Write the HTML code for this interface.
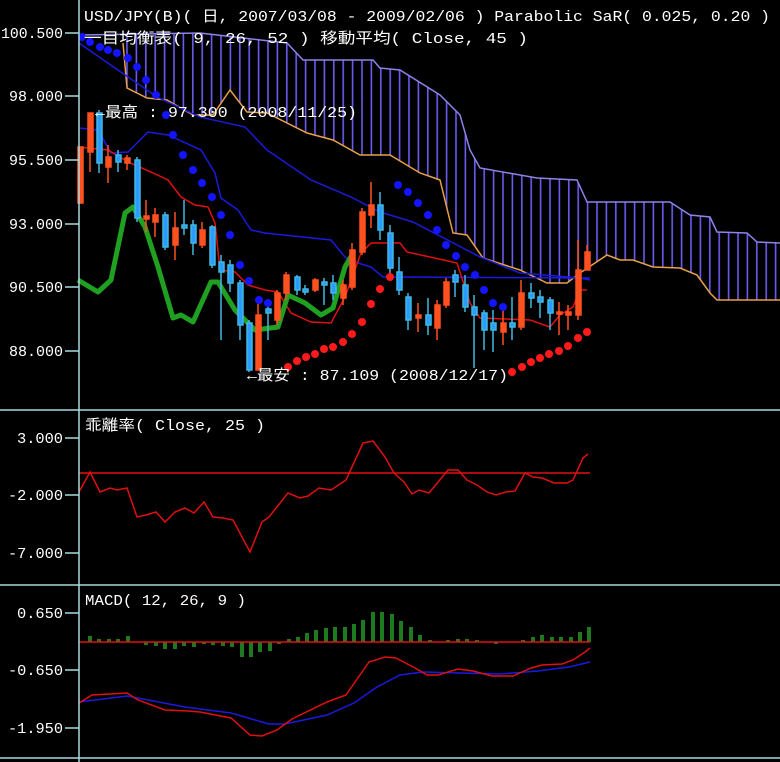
<!DOCTYPE html>
<html><head><meta charset="utf-8"><style>
html,body{margin:0;padding:0;background:#000;width:780px;height:762px;overflow:hidden}
svg{display:block}
text{font-family:"Liberation Mono","Noto Sans CJK JP",monospace;fill:#fff;font-size:15px}
</style></head><body>
<svg width="780" height="762" viewBox="0 0 780 762" xmlns="http://www.w3.org/2000/svg">
<defs>
<clipPath id="cl"><polygon points="123,34 200,33 287,43 303,60 373,60 380,68 400,70 440,95 460,115 470,150 480,168 537,178 577,180 587,202 670,202 690,215 710,217 717,232 747,233 757,242 780,243 780,300 717,300 710,293 697,275 680,268 653,267 633,260 620,260 607,255 580,273 567,283 547,283 520,270 483,258 467,235 453,233 440,180 420,173 390,155 360,155 333,140 307,133 267,113 247,112 230,90 213,115 193,115 167,100 147,98 127,88 123,43"/></clipPath>
<pattern id="hp" x="0" y="0" width="9.4" height="10" patternUnits="userSpaceOnUse"><rect x="4" y="0" width="1.6" height="10" fill="#6a5cf0"/></pattern>
</defs>
<rect width="780" height="762" fill="#000"/>
<rect x="80" y="0" width="700" height="410" fill="url(#hp)" clip-path="url(#cl)"/>
<polyline fill="none" stroke="#8c84e8" stroke-width="1.5" points="79,35 200,33 287,43 303,60 373,60 380,68 400,70 440,95 460,115 470,150 480,168 537,178 577,180 587,202 670,202 690,215 710,217 717,232 747,233 757,242 780,243"/>
<polyline fill="none" stroke="#e8a048" stroke-width="1.5" points="123,43 127,88 147,98 167,100 193,115 213,115 230,90 247,112 267,113 307,133 333,140 360,155 390,155 420,173 440,180 453,233 467,235 483,258 520,270 547,283 567,283 580,273 607,255 620,260 633,260 653,267 680,268 697,275 710,293 717,300 780,300"/>
<!-- MA45 -->
<polyline fill="none" stroke="#1a1ad8" stroke-width="1.5" points="79,43 157,97 200,117 245,127 267,150 311,180 351,197 380,212 413,222 480,257 520,273 580,278 590,280"/>
<!-- kijun -->
<polyline fill="none" stroke="#1a1ae0" stroke-width="1.5" points="79,128 98,130 111,153 128,152 148,132 168,135 201,150 215,173 221,198 238,210 251,230 265,233 331,240 345,257 358,263 371,267 383,277 398,277 590,278"/>
<!-- tenkan -->
<polyline fill="none" stroke="#e01010" stroke-width="1.5" points="78,147 108,150 128,162 151,172 168,180 181,197 195,205 208,207 215,223 220,270 235,272 248,285 265,290 278,292 291,313 311,322 331,323 345,297 361,253 371,243 400,243 407,252 430,257 457,263 470,303 480,318 530,320 550,327 560,315 573,307 580,290 587,290"/>
<!-- chikou -->
<polyline fill="none" stroke="#20a020" stroke-width="5" stroke-linejoin="round" points="78,280 98,292 111,280 125,213 133,207 145,227 158,267 173,318 181,315 193,322 211,282 218,282 235,310 255,330 278,327 288,295 305,303 321,315 333,308 345,267 353,253"/>
<!-- candles -->
<g stroke-width="1.5">
<g stroke="#ff5020" fill="#ff5020">
<line x1="80" y1="147" x2="80" y2="203"/><rect x="78" y="147" width="5" height="56"/>
<line x1="90" y1="113" x2="90" y2="172"/><rect x="88" y="113" width="5" height="39"/>
<line x1="108" y1="145" x2="108" y2="183"/><rect x="106" y="157" width="5" height="10"/>
<line x1="127" y1="155" x2="127" y2="170"/><rect x="125" y="158" width="5" height="5"/>
<line x1="146" y1="200" x2="146" y2="232"/><rect x="144" y="216" width="5" height="3"/>
<line x1="155" y1="208" x2="155" y2="237"/><rect x="153" y="215" width="5" height="7"/>
<line x1="175" y1="212" x2="175" y2="260"/><rect x="173" y="228" width="5" height="17"/>
<line x1="202" y1="222" x2="202" y2="248"/><rect x="200" y="230" width="5" height="15"/>
<line x1="258" y1="300" x2="258" y2="370"/><rect x="256" y="315" width="5" height="55"/>
<line x1="277" y1="290" x2="277" y2="325"/><rect x="275" y="293" width="5" height="27"/>
<line x1="286" y1="272" x2="286" y2="300"/><rect x="284" y="275" width="5" height="18"/>
<line x1="315" y1="278" x2="315" y2="292"/><rect x="313" y="280" width="5" height="10"/>
<line x1="343" y1="280" x2="343" y2="305"/><rect x="341" y="285" width="5" height="13"/>
<line x1="352" y1="243" x2="352" y2="290"/><rect x="350" y="250" width="5" height="37"/>
<line x1="362" y1="208" x2="362" y2="255"/><rect x="360" y="212" width="5" height="40"/>
<line x1="371" y1="182" x2="371" y2="228"/><rect x="369" y="205" width="5" height="10"/>
<line x1="418" y1="303" x2="418" y2="332"/><rect x="416" y="315" width="5" height="3"/>
<line x1="437" y1="300" x2="437" y2="340"/><rect x="435" y="305" width="5" height="23"/>
<line x1="446" y1="278" x2="446" y2="308"/><rect x="444" y="282" width="5" height="23"/>
<line x1="503" y1="308" x2="503" y2="345"/><rect x="501" y="323" width="5" height="9"/>
<line x1="521" y1="280" x2="521" y2="330"/><rect x="519" y="293" width="5" height="34"/>
<line x1="559" y1="302" x2="559" y2="335"/><rect x="557" y="312" width="5" height="2"/>
<line x1="568" y1="305" x2="568" y2="330"/><rect x="566" y="312" width="5" height="3"/>
<line x1="578" y1="240" x2="578" y2="320"/><rect x="576" y="270" width="5" height="45"/>
<line x1="587" y1="245" x2="587" y2="270"/><rect x="585" y="252" width="5" height="18"/>
</g>
<g stroke="#40b8e0" fill="#2a9cff">
<line x1="99" y1="110" x2="99" y2="173"/><rect x="97" y="113" width="5" height="50"/>
<line x1="118" y1="150" x2="118" y2="172"/><rect x="116" y="155" width="5" height="7"/>
<line x1="137" y1="157" x2="137" y2="222"/><rect x="135" y="160" width="5" height="58"/>
<line x1="165" y1="212" x2="165" y2="250"/><rect x="163" y="215" width="5" height="32"/>
<line x1="184" y1="200" x2="184" y2="235"/><rect x="182" y="225" width="5" height="3"/>
<line x1="193" y1="220" x2="193" y2="255"/><rect x="191" y="225" width="5" height="18"/>
<line x1="212" y1="225" x2="212" y2="268"/><rect x="210" y="227" width="5" height="38"/>
<line x1="221" y1="255" x2="221" y2="340"/><rect x="219" y="262" width="5" height="10"/>
<line x1="230" y1="260" x2="230" y2="292"/><rect x="228" y="265" width="5" height="18"/>
<line x1="240" y1="280" x2="240" y2="340"/><rect x="238" y="283" width="5" height="42"/>
<line x1="249" y1="320" x2="249" y2="372"/><rect x="247" y="323" width="5" height="47"/>
<line x1="268" y1="302" x2="268" y2="340"/><rect x="266" y="309" width="5" height="4"/>
<line x1="297" y1="275" x2="297" y2="295"/><rect x="295" y="277" width="5" height="13"/>
<line x1="305" y1="285" x2="305" y2="295"/><rect x="303" y="289" width="5" height="3"/>
<line x1="324" y1="278" x2="324" y2="305"/><rect x="322" y="282" width="5" height="3"/>
<line x1="333" y1="275" x2="333" y2="300"/><rect x="331" y="283" width="5" height="10"/>
<line x1="380" y1="192" x2="380" y2="240"/><rect x="378" y="205" width="5" height="25"/>
<line x1="390" y1="225" x2="390" y2="275"/><rect x="388" y="233" width="5" height="35"/>
<line x1="399" y1="257" x2="399" y2="295"/><rect x="397" y="272" width="5" height="18"/>
<line x1="408" y1="293" x2="408" y2="330"/><rect x="406" y="297" width="5" height="23"/>
<line x1="428" y1="298" x2="428" y2="335"/><rect x="426" y="315" width="5" height="10"/>
<line x1="455" y1="270" x2="455" y2="297"/><rect x="453" y="275" width="5" height="7"/>
<line x1="465" y1="275" x2="465" y2="312"/><rect x="463" y="285" width="5" height="22"/>
<line x1="474" y1="295" x2="474" y2="368"/><rect x="472" y="307" width="5" height="8"/>
<line x1="484" y1="310" x2="484" y2="350"/><rect x="482" y="313" width="5" height="17"/>
<line x1="493" y1="310" x2="493" y2="352"/><rect x="491" y="323" width="5" height="7"/>
<line x1="512" y1="297" x2="512" y2="340"/><rect x="510" y="323" width="5" height="4"/>
<line x1="531" y1="283" x2="531" y2="308"/><rect x="529" y="293" width="5" height="5"/>
<line x1="540" y1="290" x2="540" y2="318"/><rect x="538" y="297" width="5" height="5"/>
<line x1="550" y1="297" x2="550" y2="330"/><rect x="548" y="300" width="5" height="13"/>
</g>
</g>
<!-- SAR dots -->
<g fill="#1414ff">
<circle cx="82" cy="37" r="4"/><circle cx="90" cy="42" r="4"/><circle cx="100" cy="47" r="4"/><circle cx="108" cy="50" r="4"/><circle cx="117" cy="53" r="4"/><circle cx="128" cy="58" r="4"/><circle cx="137" cy="67" r="4"/><circle cx="146" cy="80" r="4"/><circle cx="156" cy="95" r="4"/><circle cx="166" cy="115" r="4"/><circle cx="173" cy="135" r="4"/><circle cx="183" cy="155" r="4"/><circle cx="193" cy="170" r="4"/><circle cx="202" cy="183" r="4"/><circle cx="212" cy="197" r="4"/><circle cx="221" cy="215" r="4"/><circle cx="230" cy="235" r="4"/><circle cx="240" cy="265" r="4"/><circle cx="249" cy="281" r="4"/><circle cx="259" cy="300" r="4"/><circle cx="268" cy="303" r="4"/>
<circle cx="398" cy="185" r="4"/><circle cx="408" cy="192" r="4"/><circle cx="418" cy="203" r="4"/><circle cx="428" cy="215" r="4"/><circle cx="437" cy="230" r="4"/><circle cx="446" cy="245" r="4"/><circle cx="456" cy="256" r="4"/><circle cx="465" cy="267" r="4"/><circle cx="475" cy="275" r="4"/><circle cx="484" cy="290" r="4"/><circle cx="493" cy="303" r="4"/><circle cx="503" cy="307" r="4"/>
</g>
<g fill="#ff1a1a">
<circle cx="288" cy="367" r="4"/><circle cx="297" cy="361" r="4"/><circle cx="306" cy="357" r="4"/><circle cx="315" cy="354" r="4"/><circle cx="324" cy="349" r="4"/><circle cx="333" cy="347" r="4"/><circle cx="343" cy="342" r="4"/><circle cx="352" cy="334" r="4"/><circle cx="362" cy="322" r="4"/><circle cx="371" cy="304" r="4"/><circle cx="380" cy="289" r="4"/><circle cx="390" cy="277" r="4"/>
<circle cx="512" cy="372" r="4"/><circle cx="522" cy="367" r="4"/><circle cx="531" cy="362" r="4"/><circle cx="540" cy="358" r="4"/><circle cx="549" cy="354" r="4"/><circle cx="559" cy="351" r="4"/><circle cx="568" cy="346" r="4"/><circle cx="578" cy="338" r="4"/><circle cx="587" cy="332" r="4"/>
</g>
<!-- texts main -->
<text x="84" y="21" textLength="686" lengthAdjust="spacingAndGlyphs">USD/JPY(B)( 日, 2007/03/08 - 2009/02/06 )   Parabolic SaR( 0.025, 0.20 )</text>
<text x="84" y="43" textLength="444" lengthAdjust="spacingAndGlyphs">一目均衡表( 9, 26, 52 )   移動平均( Close, 45 )</text>
<text x="95" y="117" textLength="262" lengthAdjust="spacingAndGlyphs">←最高 : 97.300 (2008/11/25)</text>
<text x="247" y="380" textLength="261" lengthAdjust="spacingAndGlyphs">←最安 : 87.109 (2008/12/17)</text>
<!-- panel 2 -->
<line x1="79" y1="473" x2="590" y2="473" stroke="#e01010" stroke-width="1.5"/>
<polyline fill="none" stroke="#e01010" stroke-width="1.5" points="79,492 90,472 100,492 110,488 117,490 127,488 137,517 146,515 156,512 165,522 175,512 185,508 194,513 204,502 213,517 223,518 233,520 250,552 262,522 269,517 288,493 300,498 308,496 319,488 331,490 346,480 363,443 373,441 385,457 394,473 404,482 412,494 419,490 429,493 448,470 458,470 467,480 477,485 487,492 496,495 506,492 515,491 525,473 533,477 542,478 554,483 567,483 573,480 583,458 588,454"/>
<text x="85" y="430" textLength="180" lengthAdjust="spacingAndGlyphs">乖離率( Close, 25 )</text>
<!-- panel 3 -->
<g fill="#1e7a1e">
<rect x="88" y="636" width="4" height="6"/><rect x="97" y="639" width="4" height="3"/><rect x="107" y="639" width="4" height="3"/><rect x="116" y="639" width="4" height="3"/><rect x="126" y="636" width="4" height="6"/>
<rect x="144" y="642" width="4" height="3"/><rect x="154" y="642" width="4" height="4"/><rect x="163" y="642" width="4" height="7"/><rect x="173" y="642" width="4" height="7"/><rect x="182" y="642" width="4" height="4"/><rect x="192" y="642" width="4" height="5"/><rect x="202" y="642" width="4" height="2"/><rect x="211" y="642" width="4" height="3"/><rect x="221" y="642" width="4" height="4"/><rect x="230" y="642" width="4" height="5"/><rect x="240" y="642" width="4" height="15"/><rect x="249" y="642" width="4" height="15"/><rect x="258" y="642" width="4" height="10"/><rect x="268" y="642" width="4" height="9"/><rect x="277" y="642" width="4" height="2"/>
<rect x="287" y="639" width="4" height="3"/><rect x="296" y="637" width="4" height="5"/><rect x="305" y="633" width="4" height="9"/><rect x="314" y="630" width="4" height="12"/><rect x="324" y="628" width="4" height="14"/><rect x="333" y="627" width="4" height="15"/><rect x="343" y="627" width="4" height="15"/><rect x="352" y="624" width="4" height="18"/><rect x="361" y="620" width="4" height="22"/><rect x="371" y="612" width="4" height="30"/><rect x="380" y="612" width="4" height="30"/><rect x="390" y="614" width="4" height="28"/><rect x="399" y="621" width="4" height="21"/><rect x="409" y="627" width="4" height="15"/><rect x="418" y="635" width="4" height="7"/><rect x="428" y="640" width="4" height="2"/>
<rect x="446" y="640" width="4" height="2"/><rect x="456" y="639" width="4" height="3"/><rect x="465" y="639" width="4" height="3"/><rect x="475" y="640" width="4" height="2"/><rect x="494" y="642" width="4" height="2"/><rect x="521" y="640" width="4" height="2"/><rect x="531" y="637" width="4" height="5"/><rect x="540" y="635" width="4" height="7"/><rect x="550" y="637" width="4" height="5"/><rect x="559" y="637" width="4" height="5"/><rect x="569" y="637" width="4" height="5"/><rect x="578" y="632" width="4" height="10"/><rect x="587" y="627" width="4" height="15"/>
</g>
<line x1="79" y1="642" x2="590" y2="642" stroke="#e01010" stroke-width="1.5"/>
<polyline fill="none" stroke="#1a1ae0" stroke-width="1.5" points="79,702 127,696 185,707 231,713 269,724 285,724 327,715 354,703 377,687 400,675 423,672 500,674 538,671 569,667 590,662"/>
<polyline fill="none" stroke="#e01010" stroke-width="1.5" points="79,703 92,695 127,693 138,700 165,710 188,711 200,712 231,718 250,735 262,736 277,730 292,719 327,702 346,695 369,662 385,657 396,658 415,668 427,675 438,675 458,669 473,671 492,676 513,676 531,668 542,665 562,664 573,660 585,652 590,648"/>
<text x="85" y="605" textLength="161" lengthAdjust="spacingAndGlyphs">MACD( 12, 26, 9 )</text>
<!-- axes -->
<g stroke="#a8dcdc" stroke-width="1.5">
<line x1="79" y1="0" x2="79" y2="762"/>
<line x1="0" y1="410" x2="780" y2="410"/>
<line x1="0" y1="585" x2="780" y2="585"/>
<line x1="0" y1="758" x2="780" y2="758"/>
<line x1="65" y1="33" x2="79" y2="33"/><line x1="65" y1="96" x2="79" y2="96"/><line x1="65" y1="160" x2="79" y2="160"/><line x1="65" y1="224" x2="79" y2="224"/><line x1="65" y1="287" x2="79" y2="287"/><line x1="65" y1="351" x2="79" y2="351"/>
<line x1="65" y1="438" x2="79" y2="438"/><line x1="65" y1="495" x2="79" y2="495"/><line x1="65" y1="553" x2="79" y2="553"/>
<line x1="65" y1="613" x2="79" y2="613"/><line x1="65" y1="670" x2="79" y2="670"/><line x1="65" y1="728" x2="79" y2="728"/>
</g>
<g text-anchor="end">
<text x="63" y="38" textLength="62" lengthAdjust="spacingAndGlyphs">100.500</text>
<text x="63" y="101" textLength="54" lengthAdjust="spacingAndGlyphs">98.000</text>
<text x="63" y="165" textLength="54" lengthAdjust="spacingAndGlyphs">95.500</text>
<text x="63" y="229" textLength="54" lengthAdjust="spacingAndGlyphs">93.000</text>
<text x="63" y="292" textLength="54" lengthAdjust="spacingAndGlyphs">90.500</text>
<text x="63" y="356" textLength="54" lengthAdjust="spacingAndGlyphs">88.000</text>
<text x="63" y="443" textLength="46" lengthAdjust="spacingAndGlyphs">3.000</text>
<text x="63" y="500" textLength="55" lengthAdjust="spacingAndGlyphs">-2.000</text>
<text x="63" y="558" textLength="55" lengthAdjust="spacingAndGlyphs">-7.000</text>
<text x="63" y="618" textLength="46" lengthAdjust="spacingAndGlyphs">0.650</text>
<text x="63" y="675" textLength="55" lengthAdjust="spacingAndGlyphs">-0.650</text>
<text x="63" y="733" textLength="55" lengthAdjust="spacingAndGlyphs">-1.950</text>
</g>
</svg>
</body></html>
